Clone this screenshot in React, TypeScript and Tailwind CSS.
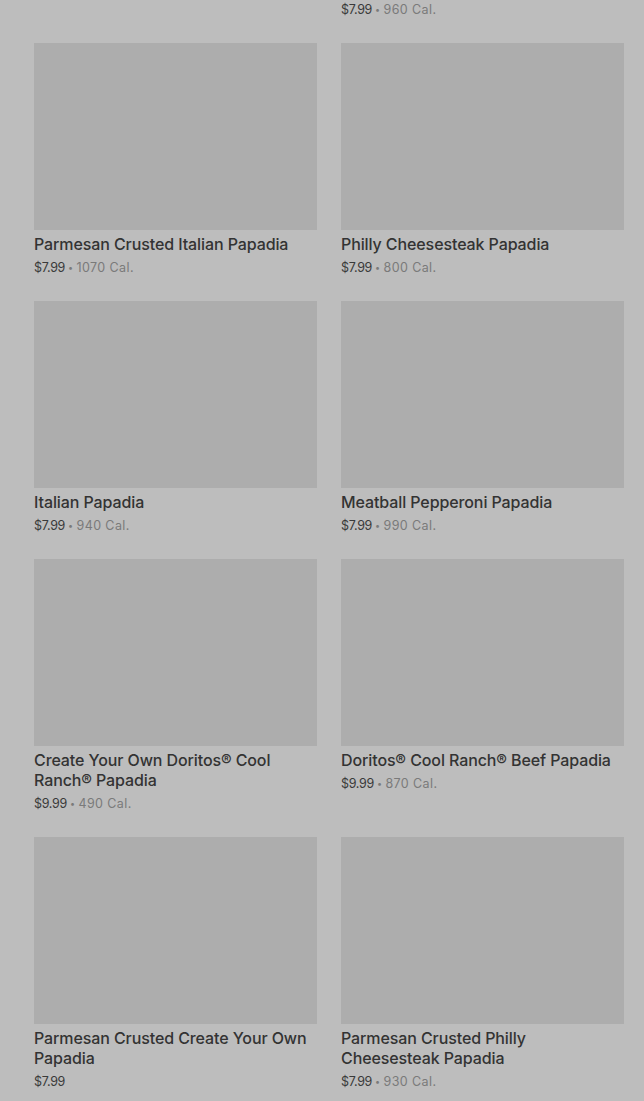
import React from 'react';

type Item = { name: string; price: string; cal?: string };

const items: Item[] = [
  { name: 'Parmesan Crusted Italian Papadia', price: '$7.99', cal: '1070 Cal.' },
  { name: 'Philly Cheesesteak Papadia', price: '$7.99', cal: '800 Cal.' },
  { name: 'Italian Papadia', price: '$7.99', cal: '940 Cal.' },
  { name: 'Meatball Pepperoni Papadia', price: '$7.99', cal: '990 Cal.' },
  { name: 'Create Your Own Doritos® Cool Ranch® Papadia', price: '$9.99', cal: '490 Cal.' },
  { name: 'Doritos® Cool Ranch® Beef Papadia', price: '$9.99', cal: '870 Cal.' },
  { name: 'Parmesan Crusted Create Your Own Papadia', price: '$7.99' },
  { name: 'Parmesan Crusted Philly Cheesesteak Papadia', price: '$7.99', cal: '930 Cal.' },
];

function PriceLine({ price, cal }: { price: string; cal?: string }) {
  return (
    <div className="text-[12.5px] leading-[18px] tracking-[-0.3px] text-[#3a3a3a]">
      {price}
      {cal && (
        <span className="text-[#7a7a7a] tracking-[0.4px]">
          <span className="mx-[3px] text-[9px] align-[1px]">•</span>
          {cal}
        </span>
      )}
    </div>
  );
}

function Card({ item }: { item: Item }) {
  return (
    <div className="flex flex-col">
      <div className="h-[187px] w-full bg-[#adadad]" />
      <div className="mt-[4px] text-[16px] leading-[20px] font-medium text-[#333333] tracking-[-0.1px]">
        {item.name}
      </div>
      <div className="mt-[5px]">
        <PriceLine price={item.price} cal={item.cal} />
      </div>
    </div>
  );
}

export default function App() {
  return (
    <div
      className="h-[1101px] w-[644px] overflow-hidden bg-[#bdbdbd]"
      style={{ fontFamily: 'Inter, "Noto Sans", sans-serif' }}
    >
      <div className="pl-[34px] pr-[20px] pt-[1px]">
        {/* bottom of the previous row, scrolled mostly off the top */}
        <div className="grid grid-cols-2 gap-x-[24px] items-start">
          <div />
          <PriceLine price="$7.99" cal="960 Cal." />
        </div>
        <div className="mt-[24px] grid grid-cols-2 gap-x-[24px] gap-y-[24px] items-start">
          {items.map((it) => (
            <Card key={it.name} item={it} />
          ))}
        </div>
      </div>
    </div>
  );
}
